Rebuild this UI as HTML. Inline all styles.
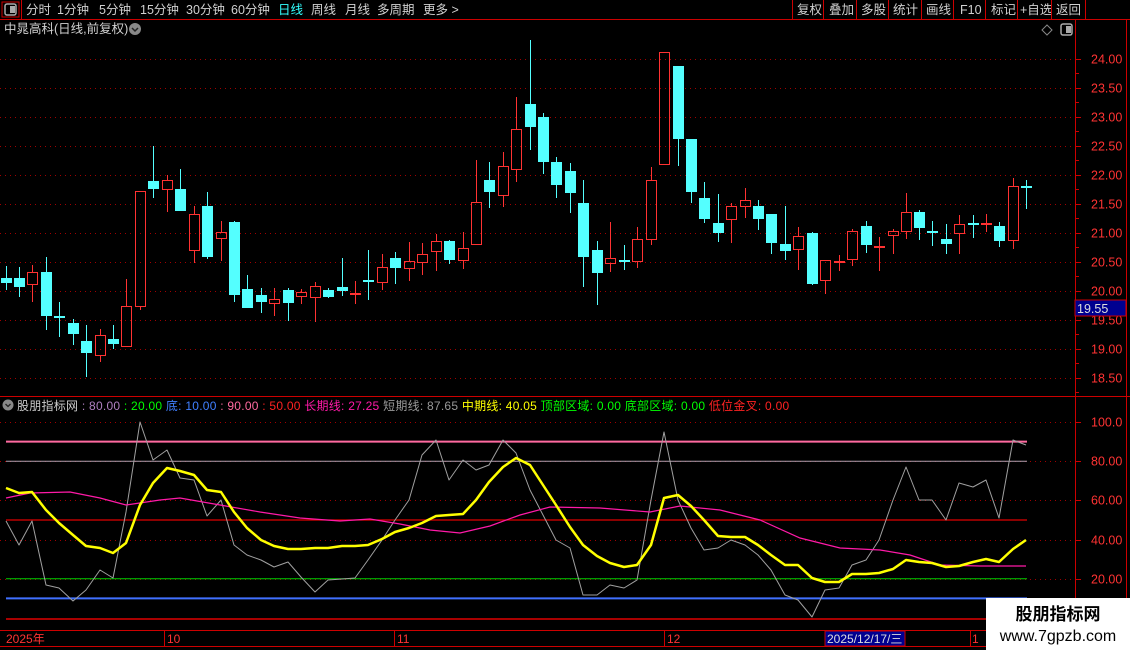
<!DOCTYPE html>
<html><head><meta charset="utf-8">
<style>
body{margin:0;background:#000;width:1130px;height:650px;overflow:hidden;font-family:"Liberation Sans","Noto Sans CJK SC",sans-serif;}
svg{position:absolute;left:0;top:0}
</style></head><body>
<svg id="s" width="1130" height="650" xmlns="http://www.w3.org/2000/svg" font-family="Liberation Sans, Noto Sans CJK SC, sans-serif">
<g font-size="12.5" fill="#d0d0d0">
<rect x="2" y="2" width="17" height="15" fill="none" stroke="#c00" stroke-width="1"/>
<rect x="5" y="4" width="11" height="11" rx="2" fill="none" stroke="#aaa" stroke-width="1.5"/><rect x="10" y="6" width="5" height="7" fill="#aaa"/>
<text x="26" y="14">分时</text><text x="57" y="14">1分钟</text><text x="99" y="14">5分钟</text><text x="140" y="14">15分钟</text><text x="186" y="14">30分钟</text><text x="231" y="14">60分钟</text>
<text x="278" y="14" fill="#3ff">日线</text><text x="311" y="14">周线</text><text x="345" y="14">月线</text><text x="377" y="14">多周期</text><text x="423" y="14">更多 &gt;</text>
<text x="797" y="14">复权</text><text x="829" y="14">叠加</text><text x="861" y="14">多股</text><text x="893" y="14">统计</text><text x="926" y="14">画线</text><text x="960" y="14">F10</text><text x="991" y="14">标记</text><text x="1020" y="14">+自选</text><text x="1056" y="14">返回</text>
<text x="4" y="33">中晁高科(日线,前复权)</text>
</g>
<circle cx="135" cy="29" r="6" fill="#888"/><path d="M132 28l3 3 3-3" stroke="#222" stroke-width="1.5" fill="none"/>
<path d="M1047 25l5 5-5 5-5-5z" fill="none" stroke="#888"/>
<rect x="1061" y="24" width="11" height="11" rx="2" fill="none" stroke="#aaa" stroke-width="1.5"/><rect x="1066" y="26" width="5" height="7" fill="#aaa"/>
<g stroke="#c00" stroke-width="1">
<line x1="0" y1="19.5" x2="1130" y2="19.5"/>
<line x1="21.5" y1="0" x2="21.5" y2="19"/>
<line x1="792.5" y1="0" x2="792.5" y2="19"/><line x1="823.5" y1="0" x2="823.5" y2="19"/><line x1="856.5" y1="0" x2="856.5" y2="19"/><line x1="888.5" y1="0" x2="888.5" y2="19"/><line x1="921.5" y1="0" x2="921.5" y2="19"/><line x1="953.5" y1="0" x2="953.5" y2="19"/><line x1="985.5" y1="0" x2="985.5" y2="19"/><line x1="1017.5" y1="0" x2="1017.5" y2="19"/><line x1="1051.5" y1="0" x2="1051.5" y2="19"/><line x1="1085.5" y1="0" x2="1085.5" y2="19"/>
<line x1="1075.5" y1="19" x2="1075.5" y2="650"/><line x1="1126.5" y1="19" x2="1126.5" y2="650"/>
<line x1="0" y1="396.5" x2="1130" y2="396.5"/>
<line x1="0" y1="630.5" x2="1075" y2="630.5"/><line x1="0" y1="646.5" x2="1075" y2="646.5"/>
<line x1="164.5" y1="630" x2="164.5" y2="646"/><line x1="394.5" y1="630" x2="394.5" y2="646"/><line x1="664.5" y1="630" x2="664.5" y2="646"/><line x1="970.5" y1="630" x2="970.5" y2="646"/>
</g>
<g id="grid"></g>
<g id="c"></g>
<g font-size="12.5" fill="#ff3333" id="ax"></g>
<rect x="1075" y="300" width="51" height="16" fill="#000090" stroke="#c00"/>
<text x="1077" y="313" font-size="12.5" fill="#ddd">19.55</text>
<g font-size="12">
<circle cx="8" cy="405" r="5.5" fill="#888"/><path d="M5.5 404l2.5 2.5 2.5-2.5" stroke="#222" stroke-width="1.3" fill="none"/>
<text x="17" y="410" letter-spacing="0.25"><tspan fill="#ccc">股朋指标网</tspan><tspan fill="#b080c0"> : 80.00 </tspan><tspan fill="#0f0">: 20.00 </tspan><tspan fill="#4080ff">底: 10.00 </tspan><tspan fill="#ff6aa0">: 90.00 </tspan><tspan fill="#f22">: 50.00 </tspan><tspan fill="#ff1aa8">长期线: 27.25 </tspan><tspan fill="#999">短期线: 87.65 </tspan><tspan fill="#ff0">中期线: 40.05 </tspan><tspan fill="#0f0">顶部区域: 0.00 </tspan><tspan fill="#0f0">底部区域: 0.00 </tspan><tspan fill="#f22">低位金叉: 0.00</tspan></text>
</g>
<g id="ind"></g>
<g font-size="12" fill="#ff3333">
<text x="6" y="643">2025年</text><text x="167" y="643">10</text><text x="397" y="643">11</text><text x="667" y="643">12</text><text x="972" y="643">1</text>
</g>
<rect x="825" y="631" width="80" height="15" fill="#000090" stroke="#c00"/>
<text x="827" y="643" font-size="12" fill="#ddd">2025/12/17/三</text>
<rect x="986" y="598" width="144" height="52" fill="#fff"/>
<text x="1058" y="620" font-size="17" font-weight="bold" fill="#000" text-anchor="middle">股朋指标网</text>
<text x="1058" y="641" font-size="16" fill="#000" text-anchor="middle">www.7gpzb.com</text>
</svg>
<script>
var NS="http://www.w3.org/2000/svg";
function el(p,t,a){var e=document.createElementNS(NS,t);for(var k in a)e.setAttribute(k,a[k]);document.getElementById(p).appendChild(e);return e;}
var py=function(v){return 174.5+(22-v)*58;};
for(var v=18.5;v<=24.01;v+=0.5){var y=Math.round(py(v))+0.5;
 el("grid","line",{x1:0,y1:y,x2:1075,y2:y,stroke:"#a00000","stroke-dasharray":"1 4"});
 el("grid","line",{x1:1075,y1:y,x2:1081,y2:y,stroke:"#c00"});
 var t=el("ax","text",{x:1091,y:y+4});t.textContent=v.toFixed(2);}
for(var v=18.25;v<24.2;v+=0.5){var y=Math.round(py(v))+0.5;el("grid","line",{x1:1075,y1:y,x2:1079,y2:y,stroke:"#c00"});}
var iy=function(v){return 422+(100-v)*1.96;};
[100,80,60,40,20].forEach(function(v){var y=Math.round(iy(v))+0.5;
 el("grid","line",{x1:0,y1:y,x2:1075,y2:y,stroke:"#a00000","stroke-dasharray":"1 4"});
 el("grid","line",{x1:1075,y1:y,x2:1081,y2:y,stroke:"#c00"});
 var t=el("ax","text",{x:1091,y:y+4});t.textContent=v==100?"100.0":v.toFixed(2);});
var C=[[6,266,278,283,290,0],[19,267,278,287,297,0],[32,265,272,285,302,1],[46,257,272,316,330,0],[59,302,316,318,337,0],[73,319,323,334,345,0],[86,325,341,353,377,0],[100,329,335,356,362,1],[113,325,339,344,349,0],[126,279,306,347,347,1],[140,191,191,307,310,1],[153,146,181,189,198,0],[167,175,180,190,212,1],[180,169,189,211,211,0],[194,206,214,251,263,1],[207,192,206,257,259,0],[221,221,232,239,261,1],[234,221,222,295,302,0],[247,275,289,308,308,0],[261,288,295,302,313,0],[274,288,299,304,316,1],[288,288,290,303,321,0],[301,289,292,297,304,1],[315,282,286,298,322,1],[328,288,290,297,298,0],[342,258,287,291,296,0],[355,281,293,295,304,1],[368,250,280,282,300,0],[382,254,267,283,290,1],[395,252,258,268,284,0],[409,242,261,269,281,1],[422,243,254,263,275,1],[436,234,241,252,271,1],[449,240,241,260,264,0],[463,232,248,261,269,1],[476,160,202,245,245,1],[489,162,180,192,208,0],[503,152,166,196,207,1],[516,97,129,170,182,1],[530,40,104,127,150,0],[543,113,117,162,174,0],[556,157,162,185,198,0],[570,163,171,193,213,0],[583,180,203,257,287,0],[597,241,250,273,305,0],[610,222,258,264,272,1],[624,245,260,262,270,0],[637,227,239,262,268,1],[651,167,180,240,245,1],[664,52,52,165,165,1],[678,66,66,139,166,0],[691,139,139,192,203,0],[704,182,198,219,223,0],[718,194,223,233,242,0],[731,203,206,220,243,1],[745,188,200,207,218,1],[758,200,206,219,230,0],[771,214,214,243,254,0],[785,206,244,251,260,0],[798,227,236,250,270,1],[812,232,233,284,285,0],[825,260,260,281,294,1],[839,255,261,263,271,1],[852,229,231,260,266,1],[866,221,226,245,253,0],[879,237,246,248,271,1],[893,229,231,236,254,1],[906,193,212,232,239,1],[919,210,212,228,240,0],[932,221,231,233,246,0],[946,224,239,244,254,0],[959,215,224,234,254,1],[973,215,223,225,238,0],[986,214,223,225,232,1],[999,222,226,241,247,0],[1013,178,186,241,249,1],[1026,180,186,188,209,0]];
C.forEach(function(c){var x=c[0],col=c[5]?"#ff3232":"#54ffff";
 el("c","line",{x1:x+0.5,y1:c[1],x2:x+0.5,y2:c[2],stroke:col});
 el("c","line",{x1:x+0.5,y1:c[3],x2:x+0.5,y2:c[4],stroke:col});
 var h=c[3]-c[2];
 if(h<=2){el("c","rect",{x:x-5,y:c[2],width:11,height:2,fill:col});}
 else if(c[5]){el("c","rect",{x:x-4.5,y:c[2]+0.5,width:10,height:h-1,fill:"none",stroke:col});}
 else el("c","rect",{x:x-5,y:c[2],width:11,height:h,fill:col});});
function hl(v,col,w){var y=iy(v);el("ind","line",{x1:6,y1:y,x2:1027,y2:y,stroke:col,"stroke-width":w});}
hl(90,"#ff6aa0",2);hl(80,"#b0a0b0",1);hl(50,"#e00000",1.3);hl(20,"#00d000",1);hl(10,"#4070ff",2);
el("ind","line",{x1:6,y1:619,x2:1075,y2:619,stroke:"#e00000","stroke-width":1.5});
var xs=C.map(function(c){return c[0];});
var Y=[488,493,492,510,523,535,546,548,553,543,505,483,468,471,475,490,492,512,528,540,546,549,549,548,548,546,546,545,539,532,528,523,516,515,514,500,482,467,458,465,485,505,527,545,556,563,567,565,545,498,495,506,520,536,537,537,545,555,565,565,578,582,582,574,574,573,569,560,562,563,567,566,562,559,562,549,540];
var G=[521,545,521,585,588,601,590,570,578,512,422,460,450,478,480,516,500,545,555,560,567,562,577,592,580,579,578,560,540,520,500,455,440,480,460,470,465,440,453,490,515,540,548,595,595,585,588,580,500,432,500,528,550,548,540,545,555,570,595,600,617,590,588,565,560,540,500,467,500,500,520,483,487,480,518,440,445];
function pl(ys,col,w){el("ind","polyline",{points:xs.map(function(x,i){return x+","+ys[i];}).join(" "),fill:"none",stroke:col,"stroke-width":w,"stroke-linejoin":"round"});}
pl(G,"#a0a0a0",1);
el("ind","polyline",{points:"6,498 30,493 70,492 100,498 126,505 160,500 180,498 220,505 260,512 300,518 340,521 370,519 400,524 430,530 460,533 490,526 520,515 550,507 600,508 650,512 680,506 720,510 760,520 800,538 840,548 880,550 910,555 940,565 980,566 1026,566",fill:"none",stroke:"#ff1aa8","stroke-width":1.2});
pl(Y,"#ffff00",2.5);
</script>
</body></html>
